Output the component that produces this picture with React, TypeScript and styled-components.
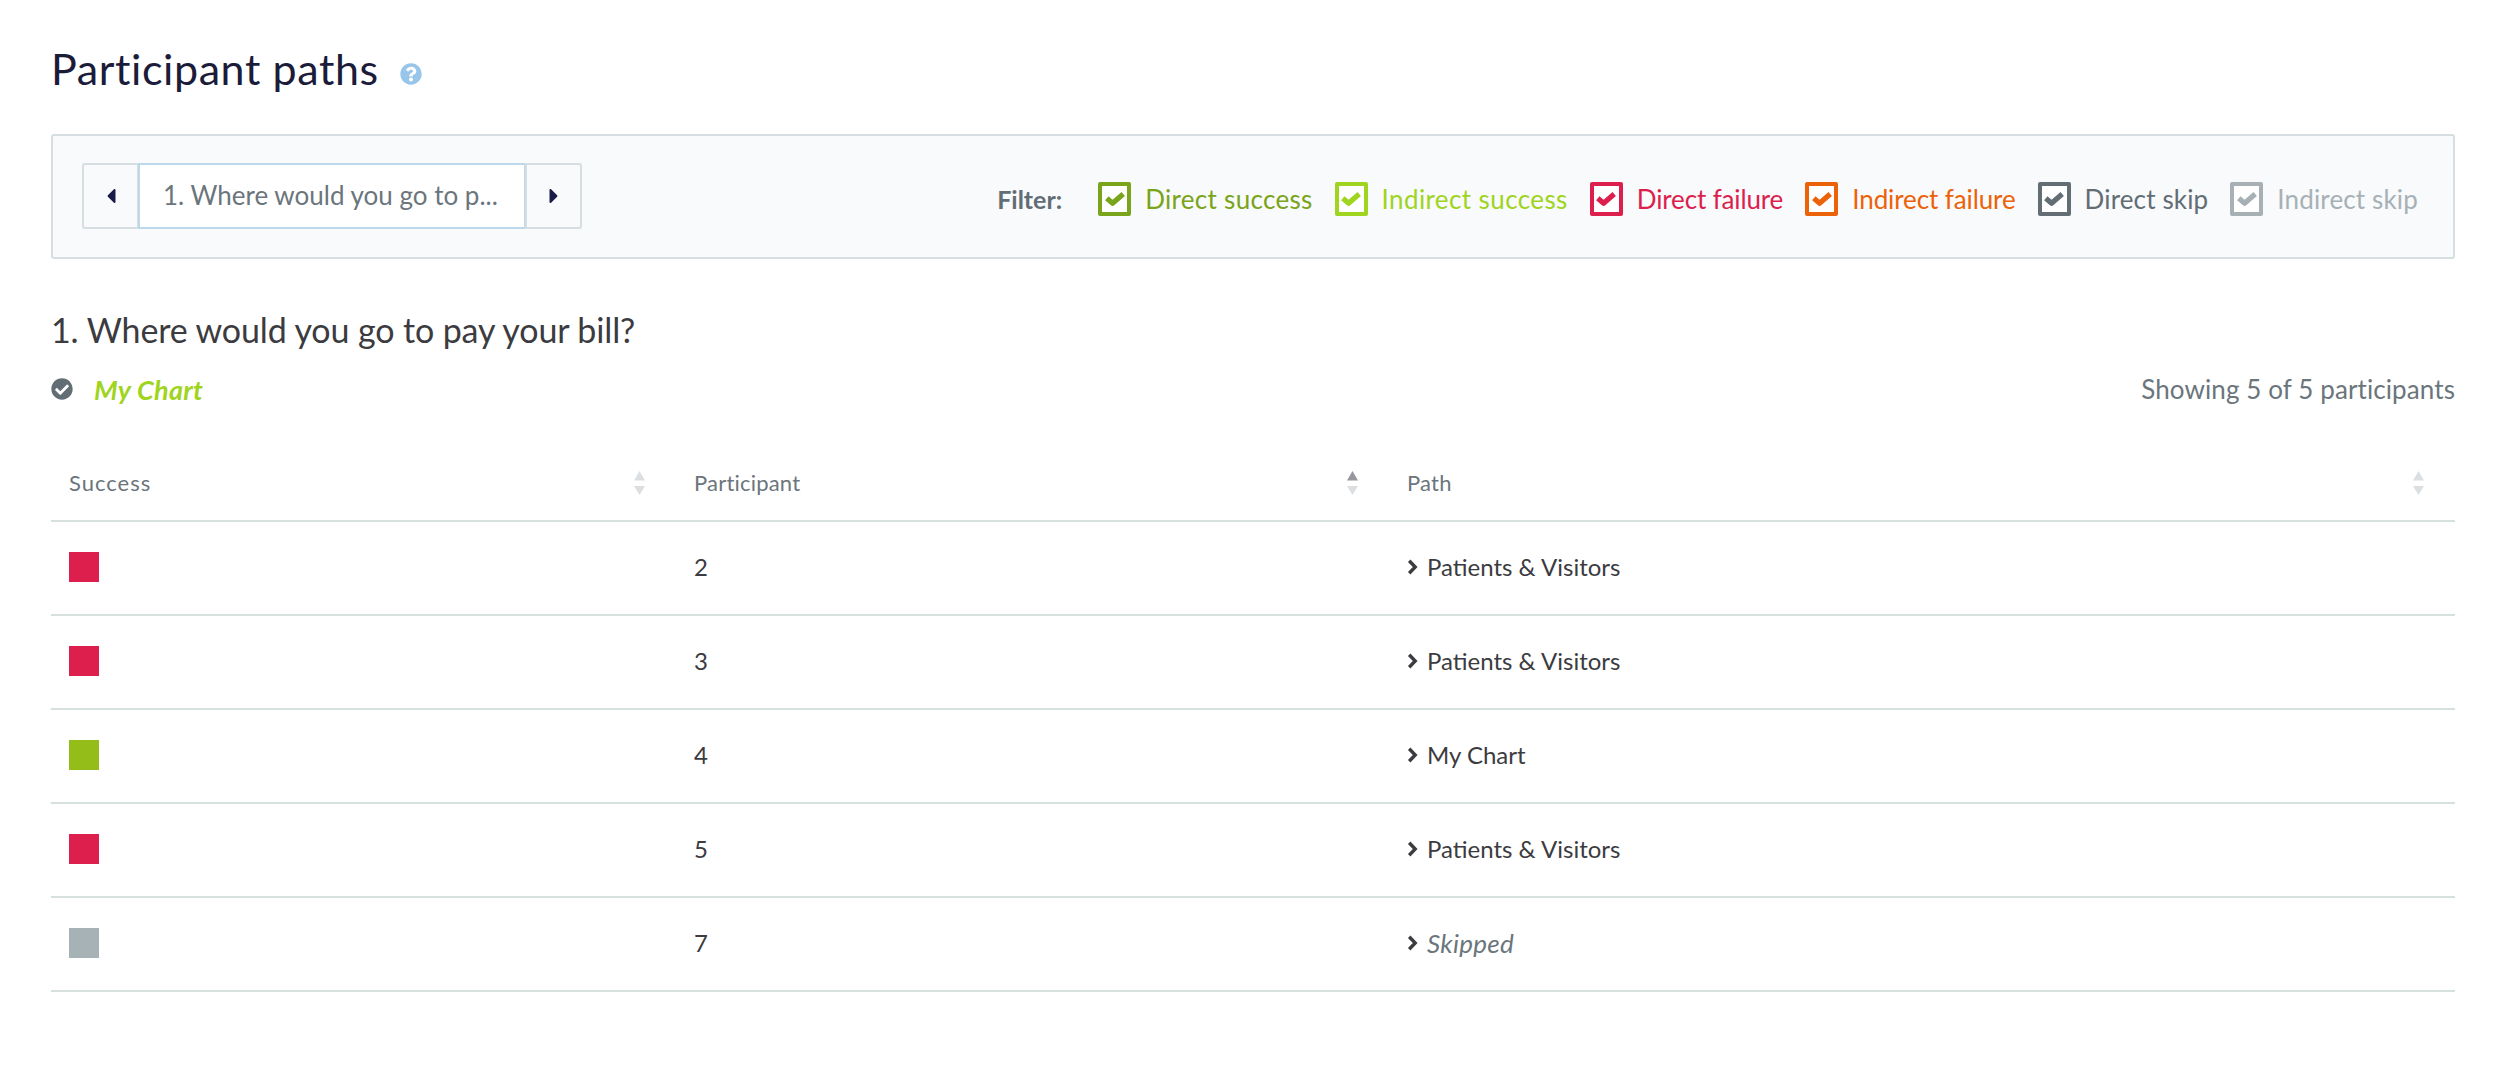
import React, { FC } from "react";
import styled, { createGlobalStyle } from "styled-components";
import { FaQuestionCircle, FaCheckCircle, FaCaretLeft, FaCaretRight } from "react-icons/fa";

const FONT = `"Lato", "Open Sans", "Liberation Sans", sans-serif`;

const GlobalStyle = createGlobalStyle`
  html, body {
    margin: 0;
    padding: 0;
    background: #fff;
    font-family: ${FONT};
  }
  * { box-sizing: border-box; }
`;

type TFilter = { label: string; color: string; tracking: number };

const filters: TFilter[] = [
  { label: "Direct success", color: "#7aa419", tracking: 0.3 },
  { label: "Indirect success", color: "#9fd41f", tracking: 0.4 },
  { label: "Direct failure", color: "#dc1f4c", tracking: -0.13 },
  { label: "Indirect failure", color: "#ec6209", tracking: -0.1 },
  { label: "Direct skip", color: "#626d74", tracking: 0.15 },
  { label: "Indirect skip", color: "#a7b1b5", tracking: 0.15 },
];

type TRow = { id: number; color: string; path: string; skipped?: boolean };

const rows: TRow[] = [
  { id: 2, color: "#dc1f4c", path: "Patients & Visitors" },
  { id: 3, color: "#dc1f4c", path: "Patients & Visitors" },
  { id: 4, color: "#94bd1a", path: "My Chart" },
  { id: 5, color: "#dc1f4c", path: "Patients & Visitors" },
  { id: 7, color: "#a7b2b6", path: "Skipped", skipped: true },
];

const SortIcon: FC<{ active?: boolean }> = ({ active }) => (
  <SortSvg viewBox="0 0 11 24" width="11" height="24">
    <path d="M5.5 0 L11 9.5 L0 9.5 Z" fill={active ? "#96989c" : "#dcdfe1"} />
    <path d="M0 15 L11 15 L5.5 24 Z" fill="#dcdfe1" />
  </SortSvg>
);

const Check: FC = () => (
  <svg viewBox="0 0 20 14" width="20" height="14">
    <path d="M1.8 6.2 L7.6 11.2 L18.2 2" fill="none" stroke="currentColor" strokeWidth="5.2" strokeLinejoin="round" />
  </svg>
);

const Chevron: FC = () => (
  <svg viewBox="0 0 11 16" width="11" height="16">
    <path d="M2.2 1.8 L8.2 8 L2.2 14.2" fill="none" stroke="currentColor" strokeWidth="3.4" />
  </svg>
);

const App: FC = () => {
  return (
    <Page>
      <GlobalStyle />
      <TitleRow>
        <Title>Participant paths</Title>
        <HelpIcon><FaQuestionCircle size={22} /></HelpIcon>
      </TitleRow>

      <Toolbar>
        <Stepper>
          <StepButton aria-label="previous"><FaCaretLeft size={24} /></StepButton>
          <StepLabel>1. Where would you go to p...</StepLabel>
          <StepButton aria-label="next"><FaCaretRight size={24} /></StepButton>
        </Stepper>
        <Filters>
          <FilterTitle>Filter:</FilterTitle>
          {filters.map((f) => (
            <FilterItem key={f.label} $color={f.color} $tracking={f.tracking}>
              <CheckBox><Check /></CheckBox>
              {f.label}
            </FilterItem>
          ))}
        </Filters>
      </Toolbar>

      <Question>1. Where would you go to pay your bill?</Question>
      <AnswerRow>
        <Answer>
          <AnswerIcon><FaCheckCircle size={22} /></AnswerIcon>
          <AnswerText>My Chart</AnswerText>
        </Answer>
        <Showing>Showing 5 of 5 participants</Showing>
      </AnswerRow>

      <Table>
        <colgroup>
          <col width="625" />
          <col width="713" />
          <col />
        </colgroup>
        <thead>
          <tr>
            <th><HeadCell $tracking={1}>Success<SortIcon /></HeadCell></th>
            <th><HeadCell>Participant<SortIcon active /></HeadCell></th>
            <th><HeadCell>Path<SortIcon /></HeadCell></th>
          </tr>
        </thead>
        <tbody>
          {rows.map((r) => (
            <tr key={r.id}>
              <td><Swatch $color={r.color} /></td>
              <td>{r.id}</td>
              <td>
                <PathCell $skipped={r.skipped}>
                  <Chevron />
                  <span>{r.path}</span>
                </PathCell>
              </td>
            </tr>
          ))}
        </tbody>
      </Table>
    </Page>
  );
};

export default App;

const Page = styled.div`
  width: 2500px;
  min-height: 1078px;
  padding: 43px 45px 0 51px;
  background: #fff;
`;

const TitleRow = styled.div`
  display: flex;
  align-items: center;
  height: 52px;
`;

const Title = styled.h1`
  margin: 0;
  font-size: 43px;
  font-weight: 400;
  letter-spacing: 0.6px;
  line-height: 52px;
  color: #1b1b3a;
`;

const HelpIcon = styled.span`
  display: flex;
  margin: 10px 0 0 21px;
  color: #98c6ea;
`;

const Toolbar = styled.div`
  display: flex;
  align-items: center;
  justify-content: space-between;
  height: 125px;
  margin-top: 39px;
  padding: 0 35px 0 29px;
  background: #f8fafc;
  border: 2px solid #d6dee1;
  border-radius: 3px;
`;

const Stepper = styled.div`
  display: flex;
  height: 66px;
  margin-top: -2px;
`;

const StepButton = styled.button`
  display: flex;
  align-items: center;
  justify-content: center;
  width: 57px;
  padding: 0;
  background: #f8fafc;
  border: 2px solid #d6dee1;
  border-radius: 3px 0 0 3px;
  color: #1b1b4a;
  &:last-child {
    border-radius: 0 3px 3px 0;
  }
`;

const StepLabel = styled.div`
  display: flex;
  align-items: center;
  width: 388px;
  margin: 0 -1px;
  padding: 0 0 2px 23px;
  background: #fff;
  border: 2px solid #bcd9ec;
  font-size: 26px;
  color: #6b757c;
  white-space: nowrap;
`;

const Filters = styled.div`
  display: flex;
  align-items: center;
  margin-top: 5px;
`;

const FilterTitle = styled.span`
  margin-right: 36px;
  font-size: 25px;
  font-weight: 700;
  color: #626d74;
`;

const FilterItem = styled.label<{ $color: string; $tracking: number }>`
  display: flex;
  align-items: center;
  gap: 14px;
  margin-right: 22px;
  font-size: 26px;
  letter-spacing: ${(p) => p.$tracking}px;
  color: ${(p) => p.$color};
  &:last-child {
    margin-right: 0;
  }
`;

const CheckBox = styled.span`
  display: flex;
  align-items: center;
  justify-content: center;
  width: 33px;
  height: 34px;
  background: #fff;
  border: 4px solid currentColor;
  border-radius: 2px;
`;

const Question = styled.h2`
  margin: 49px 0 0;
  font-size: 34px;
  font-weight: 400;
  letter-spacing: -0.12px;
  line-height: 44px;
  color: #3b3b40;
`;

const AnswerRow = styled.div`
  display: flex;
  align-items: center;
  justify-content: space-between;
  height: 36px;
  margin-top: 19px;
`;

const Answer = styled.div`
  display: flex;
  align-items: center;
`;

const AnswerIcon = styled.span`
  display: flex;
  margin-right: 21px;
  color: #626d74;
`;

const AnswerText = styled.span`
  font-size: 27px;
  font-weight: 700;
  font-style: italic;
  letter-spacing: 0.3px;
  color: #9fd41f;
`;

const Showing = styled.span`
  font-size: 26px;
  letter-spacing: 0.1px;
  color: #6b757c;
`;

const Table = styled.table`
  width: 100%;
  margin-top: 38px;
  border-collapse: collapse;
  table-layout: fixed;
  th {
    height: 76px;
    padding: 0 18px;
    border-bottom: 2px solid #d5e0df;
    font-size: 22px;
    font-weight: 400;
    letter-spacing: 0.2px;
    text-align: left;
    color: #6b757c;
  }
  td {
    height: 94px;
    padding: 0 18px 3px;
    border-bottom: 2px solid #d5e0df;
    font-size: 24px;
    color: #3b3b40;
  }
`;

const HeadCell = styled.div<{ $tracking?: number }>`
  display: flex;
  align-items: center;
  justify-content: space-between;
  letter-spacing: ${(p) => p.$tracking ?? 0.2}px;
`;

const SortSvg = styled.svg`
  margin-right: 13px;
`;

const Swatch = styled.div<{ $color: string }>`
  width: 30px;
  height: 30px;
  background: ${(p) => p.$color};
`;

const PathCell = styled.div<{ $skipped?: boolean }>`
  display: flex;
  align-items: center;
  gap: 9px;
  font-size: ${(p) => (p.$skipped ? "26px" : "24px")};
  font-style: ${(p) => (p.$skipped ? "italic" : "normal")};
  letter-spacing: ${(p) => (p.$skipped ? "0.3px" : "0")};
  color: ${(p) => (p.$skipped ? "#6b757c" : "#3b3b40")};
  svg {
    color: #3b3b40;
    flex-shrink: 0;
  }
`;
